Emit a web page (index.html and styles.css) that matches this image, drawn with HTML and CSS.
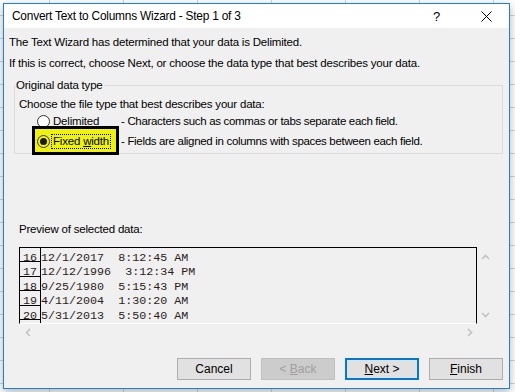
FILE: index.html
```html
<!DOCTYPE html>
<html lang="en">
  <head>
    <meta charset="UTF-8" />
    <meta name="viewport" content="width=device-width, initial-scale=1" />
    <title>Convert Text to Columns Wizard - Step 1 of 3</title>
    <link rel="stylesheet" href="styles.css">
  </head>
  <body>
    <div class="wizard">
      <!-- Title bar -->
      <div class="wizard-title">
        <span class="wizard-caption">Convert Text to Columns Wizard - Step 1 of 3</span>
        <span class="wizard-help">?</span>
        <span class="wizard-close" aria-label="Close">
          <svg width="11" height="11" viewBox="0 0 11 11">
            <path d="M0.5 0.5 L10.5 10.5 M10.5 0.5 L0.5 10.5" stroke="#000" stroke-width="1" fill="none" />
          </svg>
        </span>
      </div>

      <div class="wizard-body">
        <p class="intro">The Text Wizard has determined that your data is Delimited.</p>
        <p class="intro">If this is correct, choose Next, or choose the data type that best describes your data.</p>

        <!-- Original data type -->
        <fieldset class="type-group">
          <legend>Original data type</legend>
          <p class="type-hint">Choose the file type that best describes your data:</p>
          <div class="type-row">
            <label class="type-option"><span class="radio"></span>Delimited</label>
            <span class="type-desc">- Characters such as commas or tabs separate each field.</span>
          </div>
          <div class="type-row type-row-second">
            <div class="highlight"></div>
            <label class="type-option"><span class="radio checked"></span><span class="focus">Fixed <u>w</u>idth</span></label>
            <span class="type-desc">- Fields are aligned in columns with spaces between each field.</span>
          </div>
        </fieldset>

        <!-- Preview -->
        <div class="preview-label">Preview of selected data:</div>
        <div class="preview">
          <div class="preview-data">
            <div class="preview-row"><span class="num">16</span><span class="cell">12/1/2017  8:12:45 AM</span></div>
            <div class="preview-row"><span class="num">17</span><span class="cell">12/12/1996  3:12:34 PM</span></div>
            <div class="preview-row"><span class="num">18</span><span class="cell">9/25/1980  5:15:43 PM</span></div>
            <div class="preview-row"><span class="num">19</span><span class="cell">4/11/2004  1:30:20 AM</span></div>
            <div class="preview-row"><span class="num">20</span><span class="cell">5/31/2013  5:50:40 AM</span></div>
            <div class="preview-row"><span class="num"></span><span class="cell"></span></div>
          </div>
          <div class="vscroll">
            <svg width="9" height="6" viewBox="0 0 9 6"><path d="M1 5 L4.5 1.5 L8 5" stroke="#c2c2c2" stroke-width="1.6" fill="none" /></svg>
            <svg width="9" height="6" viewBox="0 0 9 6"><path d="M1 1 L4.5 4.5 L8 1" stroke="#c2c2c2" stroke-width="1.6" fill="none" /></svg>
          </div>
          <div class="hscroll">
            <svg width="6" height="9" viewBox="0 0 6 9"><path d="M5 1 L1.5 4.5 L5 8" stroke="#c2c2c2" stroke-width="1.6" fill="none" /></svg>
            <svg width="6" height="9" viewBox="0 0 6 9"><path d="M1 1 L4.5 4.5 L1 8" stroke="#c2c2c2" stroke-width="1.6" fill="none" /></svg>
          </div>
        </div>

        <!-- Buttons -->
        <div class="buttons">
          <button type="button" class="btn">Cancel</button>
          <button type="button" class="btn" disabled>&lt; <u>B</u>ack</button>
          <button type="button" class="btn btn-default"><u>N</u>ext &gt;</button>
          <button type="button" class="btn"><u>F</u>inish</button>
        </div>
      </div>
    </div>
  </body>
</html>
```

FILE: styles.css
```css
/* Spreadsheet behind the dialog */
body {
  margin: 0;
  height: 392px;
  overflow: hidden;
  background-color: #fff;
  background-image: linear-gradient(to right, #d4d4d4 1px, transparent 1px),
    linear-gradient(to bottom, #d4d4d4 1px, transparent 1px);
  background-size: 74px 100%, 100% 23px;
  background-position: 49px 0, 0 15px;
  font-family: "Liberation Sans", Arial, sans-serif;
  font-size: 11.5px;
  letter-spacing: -0.2px;
  color: #000;
}

/* Dialog window */
.wizard {
  margin: 3px 0 0 3px;
  width: 505px;
  height: 384px;
  border: 1px solid #1883d7;
  background: #f0f0f0;
  box-shadow: 0 3px 9px rgba(0, 0, 0, 0.3);
  display: flex;
  flex-direction: column;
}

.wizard-title {
  height: 25px;
  background: #fff;
  display: flex;
  align-items: center;
  padding-left: 8px;
}
.wizard-caption {
  flex: 1;
  font-size: 11.9px;
  letter-spacing: -0.22px;
}
.wizard-help {
  width: 12px;
  font-size: 13px;
  margin-right: 36px;
}
.wizard-close {
  display: flex;
  margin-right: 17px;
}

.wizard-body {
  flex: 1;
  padding: 4px 6px 8px 0;
  display: flex;
  flex-direction: column;
}

.intro {
  margin: 0 0 1px 5px;
  line-height: 20px;
}

/* Group box */
.type-group {
  margin: 3px 0 0 10px;
  padding: 0 0 4px 4px;
  border: 1px solid #dcdcdc;
  border-radius: 0;
  min-width: 0;
}
.type-group legend {
  padding: 0 1px;
  margin-left: -4px;
  line-height: 16px;
}
.type-hint {
  margin: 3px 0 0;
  line-height: 17px;
}
.type-row {
  position: relative;
  display: flex;
  align-items: center;
  height: 16px;
  padding-left: 18px;
}
.type-row-second {
  margin-top: 4px;
}
.type-desc {
  letter-spacing: -0.32px;
}
.type-option {
  position: relative;
  width: 84px;
  display: flex;
  align-items: center;
}
.radio {
  width: 11px;
  height: 11px;
  border: 1px solid #333;
  border-radius: 50%;
  background: #fff;
  margin-right: 3px;
  display: flex;
  align-items: center;
  justify-content: center;
  flex-shrink: 0;
}
.radio.checked {
  background: transparent;
}
.radio.checked::after {
  content: "";
  width: 7px;
  height: 7px;
  border-radius: 50%;
  background: #1a1a1a;
}
.focus {
  outline: 1px dotted #000;
  outline-offset: 0;
  padding: 0 1px;
  margin-left: -1px;
  line-height: 13px;
}

/* Yellow annotation around "Fixed width" */
.highlight {
  position: absolute;
  left: 13px;
  top: -7px;
  width: 81px;
  height: 23px;
  border: 3px solid #000;
  background: #eef20c;
}

/* Preview */
.preview-label {
  margin: 67px 0 0 15px;
  line-height: 16px;
}
.preview {
  margin: 10px 0 0 15px;
  display: grid;
  grid-template-columns: 458px 17px;
  grid-template-rows: 77px 17px;
}
.preview-data {
  border: 1px solid #000;
  border-bottom-color: #fff;
  overflow: hidden;
  font-family: "Liberation Mono", "Courier New", monospace;
  font-size: 11.7px;
  letter-spacing: 0;
  color: #2e1c1c;
}
.preview-row {
  display: flex;
  height: 14.4px;
}
.num,
.cell {
  box-sizing: border-box;
  height: 14.4px;
  padding-top: 3px;
  line-height: 14.4px;
}
.num {
  width: 21px;
  flex-shrink: 0;
  border-right: 1px solid #000;
  border-bottom: 1px solid #000;
  text-align: right;
  padding-right: 3px;
}
.cell {
  white-space: pre;
}
.vscroll {
  display: flex;
  flex-direction: column;
  justify-content: space-between;
  align-items: center;
  padding: 7px 0 6px;
}
.hscroll {
  display: flex;
  justify-content: space-between;
  align-items: center;
  padding: 0 4px 0 6px;
  margin-top: -1px;
}

/* Buttons */
.buttons {
  margin-top: 17px;
  display: flex;
  justify-content: flex-end;
  gap: 10px;
}
.btn {
  width: 74px;
  height: 22px;
  padding: 0;
  border: 1px solid #adadad;
  background: #e1e1e1;
  font-family: "Liberation Sans", Arial, sans-serif;
  font-size: 12px;
  color: #000;
}
.btn:disabled {
  background: #cccccc;
  border-color: #bfbfbf;
  color: #a0a0a0;
}
.btn-default {
  border: 2px solid #0078d7;
}
```
